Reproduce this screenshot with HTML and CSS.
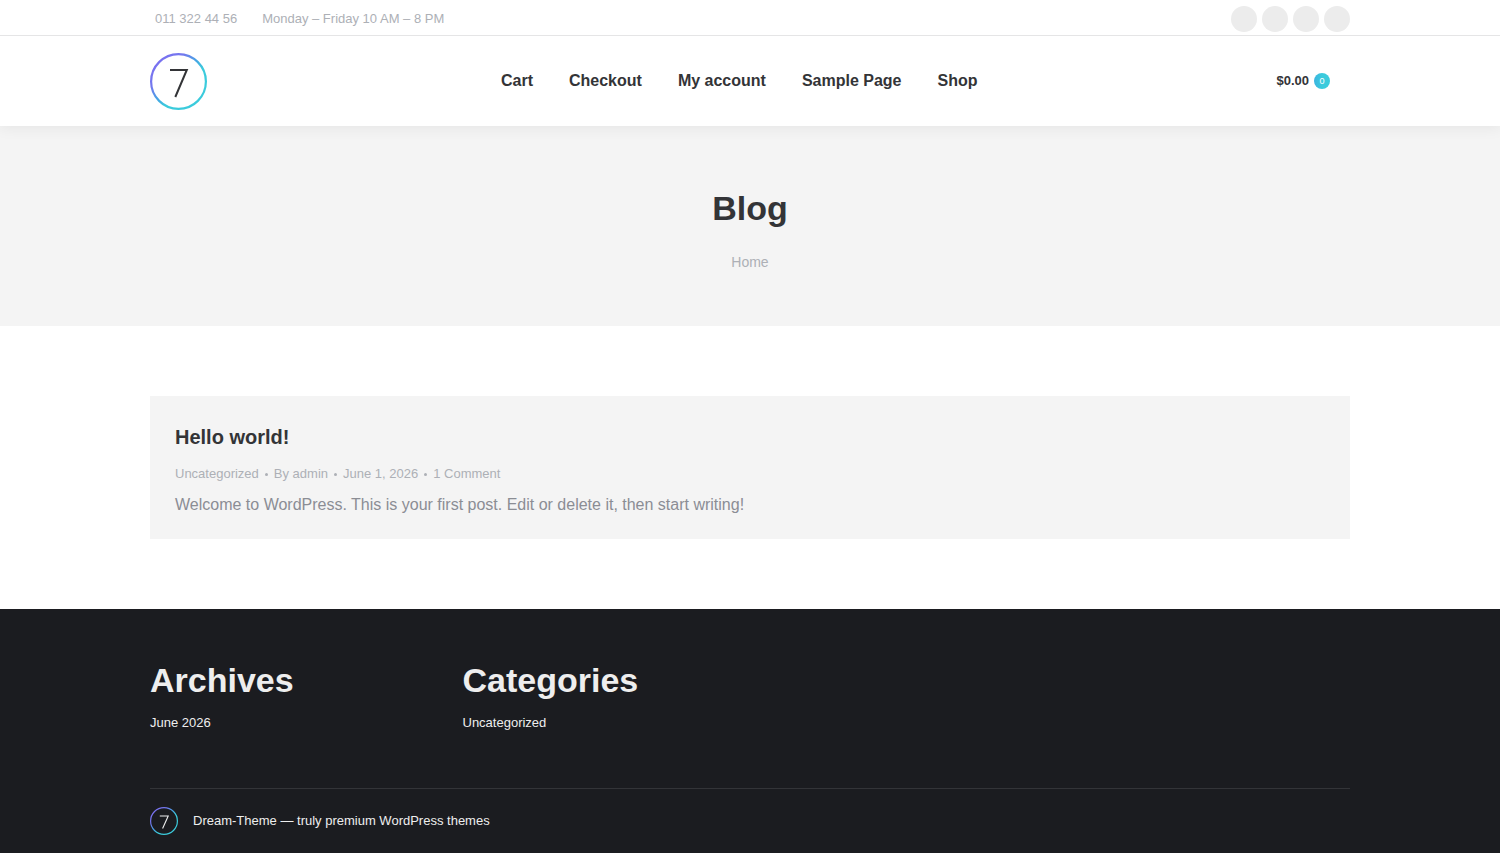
FILE: index.html
```html
<!doctype html>
<html lang="en">
<head>
  <meta charset="UTF-8">
  <meta name="viewport" content="width=device-width, initial-scale=1">
  <title>Blog</title>
  <link rel="stylesheet" href="styles.css">
</head>
<body>
  <header class="masthead">
    <div class="top-bar">
      <div class="wrap top-bar-inner">
        <span>011 322 44 56</span>
        <span>Monday – Friday 10 AM – 8 PM</span>
        <div class="soc-icons">
          <a href="#"></a>
          <a href="#"></a>
          <a href="#"></a>
          <a href="#"></a>
        </div>
      </div>
    </div>
    <div class="wrap header-bar">
      <a class="branding" href="#">
        <svg class="logo" viewBox="0 0 57 57">
          <defs>
            <linearGradient id="ring" x1="0.1" y1="0.1" x2="0.6" y2="0.6">
              <stop offset="0" stop-color="#7a70f0"/>
              <stop offset="0.4" stop-color="#7378ee"/>
              <stop offset="0.75" stop-color="#45a6e4"/>
              <stop offset="1" stop-color="#3bcbdc"/>
            </linearGradient>
          </defs>
          <circle cx="28.5" cy="28.5" r="27.4" fill="none" stroke="url(#ring)" stroke-width="2.2"/>
          <path d="M20 17H36.8L25.3 44" fill="none" stroke="#333437" stroke-width="2"/>
        </svg>
      </a>
      <nav class="main-nav">
        <a href="#">Cart</a>
        <a href="#">Checkout</a>
        <a href="#">My account</a>
        <a href="#">Sample Page</a>
        <a href="#">Shop</a>
      </nav>
      <a class="mini-cart" href="#">$0.00 <span class="counter">0</span></a>
    </div>
  </header>

  <div class="page-title">
    <h1>Blog</h1>
    <div class="breadcrumbs"><a href="#">Home</a></div>
  </div>

  <main class="wrap content">
    <article class="post">
      <h3><a href="#">Hello world!</a></h3>
      <div class="entry-meta">
        <a href="#">Uncategorized</a>
        <a href="#">By admin</a>
        <a href="#">June 1, 2026</a>
        <a href="#">1 Comment</a>
      </div>
      <p>Welcome to WordPress. This is your first post. Edit or delete it, then start writing!</p>
    </article>
  </main>

  <footer class="footer">
    <div class="wrap">
      <div class="widgets">
        <section>
          <h2>Archives</h2>
          <a href="#">June 2026</a>
        </section>
        <section>
          <h2>Categories</h2>
          <a href="#">Uncategorized</a>
        </section>
      </div>
      <div class="bottom-bar">
        <a class="branding" href="#">
          <svg class="logo-small" viewBox="0 0 28 28">
            <circle cx="14" cy="14" r="13.4" fill="none" stroke="url(#ring)" stroke-width="1.2"/>
            <path d="M9.8 9H18.2L12.6 21.5" fill="none" stroke="#eeeeee" stroke-width="1.1"/>
          </svg>
        </a>
        <span>Dream-Theme — truly premium WordPress themes</span>
      </div>
    </div>
  </footer>
</body>
</html>
```
FILE: styles.css
```css
* {
  box-sizing: border-box;
}
body {
  margin: 0;
  background: #fff;
  color: #8b8d94;
  font: 16px/26px "Liberation Sans", Helvetica, Arial, sans-serif;
}
a {
  color: inherit;
  text-decoration: none;
}
h1, h2, h3, p {
  margin: 0;
}
.wrap {
  width: 80%;
  max-width: 1200px;
  margin: 0 auto;
}
.branding {
  display: flex;
}

/* header */
.masthead {
  position: relative;
  background: #fff;
  box-shadow: 0 0 15px 1px rgba(0, 0, 0, 0.07);
}
.top-bar {
  border-bottom: 1px solid #e5e5e6;
  color: #adb0b6;
  font-size: 13px;
  line-height: 19px;
}
.top-bar-inner {
  display: flex;
  gap: 25px;
  padding: 6px 0 3px 5px;
}
.top-bar-inner span {
  padding-top: 3px;
}
.soc-icons {
  display: flex;
  gap: 5px;
  margin-left: auto;
}
.soc-icons a {
  width: 26px;
  height: 26px;
  border-radius: 50%;
  background: #ececec;
}
.header-bar {
  display: flex;
  align-items: center;
  justify-content: space-between;
  min-height: 90px;
}
.logo {
  width: 57px;
  height: 57px;
}
.main-nav {
  display: flex;
  gap: 36px;
  color: #333437;
  font-weight: bold;
}
.mini-cart {
  display: flex;
  align-items: center;
  gap: 5px;
  padding: 0 20px 0 5px;
  color: #333437;
  font-size: 13px;
  font-weight: bold;
}
.counter {
  width: 16px;
  height: 16px;
  border-radius: 50%;
  background: linear-gradient(90deg, #3bb4e0 0%, #3bcbdc 50%);
  color: #fff;
  font-size: 9px;
  font-weight: normal;
  line-height: 16px;
  text-align: center;
}

/* page title */
.page-title {
  padding: 60px 0 52px;
  background: #f4f4f4;
  text-align: center;
}
.page-title h1 {
  color: #333437;
  font-size: 34px;
  line-height: 44px;
}
.breadcrumbs {
  margin-top: 20px;
  color: #adb0b6;
  font-size: 14px;
  line-height: 24px;
}

/* posts */
.content {
  padding: 70px 0;
}
.post {
  padding: 28px 25px 21px;
  background: #f4f4f4;
}
.post h3 {
  color: #333437;
  font-size: 20px;
}
.entry-meta {
  display: flex;
  margin: 14px 0 9px;
  color: #adb0b6;
  font-size: 13px;
  line-height: 19px;
}
.entry-meta a + a::before {
  content: "";
  display: inline-block;
  width: 3px;
  height: 3px;
  margin: 0 6px;
  border-radius: 50%;
  background: #adb0b6;
  vertical-align: middle;
}

/* footer */
.footer {
  background: #1b1c20;
  color: #eeeeee;
  font-size: 13px;
  line-height: 19px;
}
.widgets {
  display: grid;
  grid-template-columns: repeat(4, 1fr);
  gap: 50px;
  padding: 49px 0 56px;
}
.widgets h2 {
  margin-bottom: 11px;
  font-size: 34px;
  line-height: 44px;
}
.bottom-bar {
  display: flex;
  align-items: center;
  gap: 15px;
  min-height: 65px;
  border-top: 1px solid #333438;
  line-height: 20px;
}
.logo-small {
  width: 28px;
  height: 28px;
}
```
